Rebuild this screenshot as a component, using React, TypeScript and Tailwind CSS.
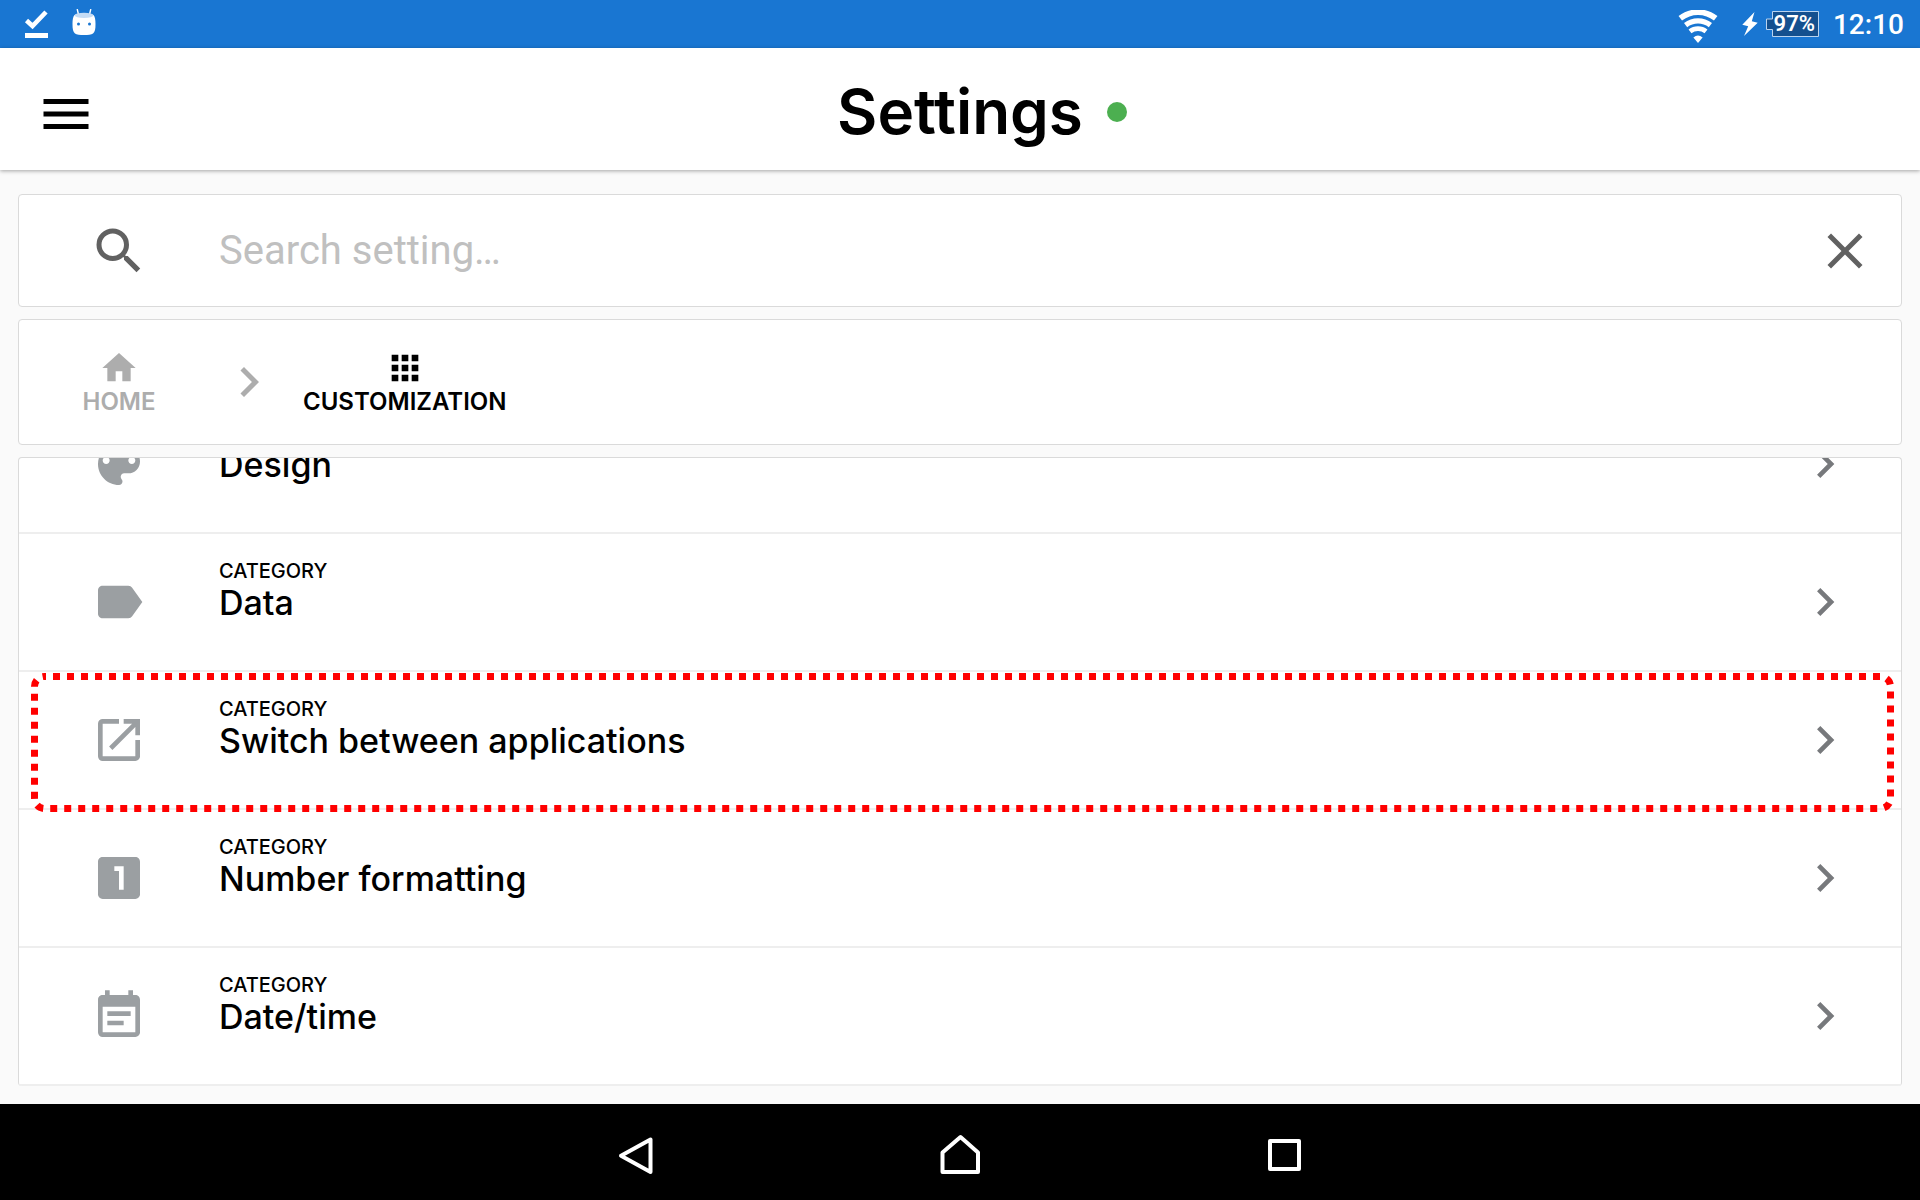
import type { ComponentType } from "react";
import {
  MdApps,
  MdChevronRight,
  MdClose,
  MdEventNote,
  MdHome,
  MdLabel,
  MdLooksOne,
  MdMenu,
  MdOpenInNew,
  MdSearch,
} from "react-icons/md";

type IconProps = { className?: string };

function PaletteIcon({ className }: IconProps) {
  return (
    <svg viewBox="0 0 24 24" fill="currentColor" className={className} aria-hidden="true">
      <path d="M12 3c-4.97 0-9 4.03-9 9s4.03 9 9 9c.83 0 1.5-.67 1.5-1.5 0-.39-.15-.74-.39-1.01-.23-.26-.38-.61-.38-.99 0-.83.67-1.5 1.5-1.5H16c2.76 0 5-2.24 5-5 0-4.42-4.03-8-9-8zm-5.5 9c-.83 0-1.5-.67-1.5-1.5S5.67 9 6.5 9 8 9.67 8 10.5 7.33 12 6.5 12zm3-4C8.67 8 8 7.33 8 6.5S8.67 5 9.5 5s1.5.67 1.5 1.5S10.33 8 9.5 8zm5 0c-.83 0-1.5-.67-1.5-1.5S13.67 5 14.5 5s1.5.67 1.5 1.5S15.33 8 14.5 8zm3 4c-.83 0-1.5-.67-1.5-1.5S16.67 9 17.5 9s1.5.67 1.5 1.5-.67 1.5-1.5 1.5z" />
    </svg>
  );
}

type Category = {
  title: string;
  icon: ComponentType<IconProps>;
  highlighted?: boolean;
};

const categories: Category[] = [
  { title: "Design", icon: PaletteIcon },
  { title: "Data", icon: MdLabel },
  { title: "Switch between applications", icon: MdOpenInNew, highlighted: true },
  { title: "Number formatting", icon: MdLooksOne },
  { title: "Date/time", icon: MdEventNote },
];

function StatusBar() {
  return (
    <div className="flex h-12 shrink-0 items-center justify-between bg-[#1976d2] pr-4 pl-6 text-white">
      <div className="flex items-center gap-6">
        <svg viewBox="0 0 24 30" className="h-[30px] w-6" aria-hidden="true">
          <path d="M2.5 11.5 8.5 17 22 3" fill="none" stroke="currentColor" strokeWidth="4.6" />
          <path d="M1 24h23v5H1z" fill="currentColor" />
        </svg>
        <svg viewBox="0 0 24 30" className="h-[30px] w-6" aria-hidden="true">
          <path d="M6.5 5.5 5.3.5M17.5 5.5l1.2-5" stroke="currentColor" strokeWidth="1.4" strokeLinecap="round" />
          <path
            d="M2.500 6h19c1.500 1.500 2 4.500 2 9 0 5-.5 8-2.500 9.500-1.500 1.200-5 1.500-9 1.500s-7.500-.3-9-1.500C1 23 .5 20 .5 15c0-4.500.5-7.500 2-9z"
            fill="currentColor"
          />
          <ellipse cx="12" cy="6.3" rx="9.5" ry="2.6" fill="#c5dcf5" />
          <circle cx="6.5" cy="15" r="1.5" fill="#1976d2" />
          <circle cx="17.5" cy="15" r="1.5" fill="#1976d2" />
        </svg>
      </div>
      <div className="flex items-center">
        <svg viewBox="0 0 40 33" className="mt-1 mr-6 h-[33px] w-10" aria-hidden="true">
          <g fill="none" stroke="currentColor">
            <path d="M2.3 8.3a28.500 28.500 0 0 1 35.400 0" strokeWidth="5.600" />
            <path d="M7.600 15.100a20.200 20.200 0 0 1 24.800 0" strokeWidth="5.200" />
            <path d="M12 21.400a12.800 12.800 0 0 1 16 0" strokeWidth="4.600" />
          </g>
          <path d="M20 33l-4.600-5.600a7.400 7.400 0 0 1 9.200 0z" fill="currentColor" />
        </svg>
        <svg viewBox="0 0 16 24" className="mr-2 h-6 w-4" fill="currentColor" aria-hidden="true">
          <path d="M12.5 0 .3 12.800l5.900 1.400L2 24 15.700 10.700 9.800 9.300z" />
        </svg>
        <div className="relative mr-[14px] flex h-[26px] w-[53px] items-center justify-end pr-1">
          <svg viewBox="0 0 53 26" className="absolute inset-0" aria-hidden="true">
            <path d="M6.500.5h46v25h-46V18.500h-6V8h6z" fill="#14508f" stroke="#b9d3ef" />
          </svg>
          <span className="relative text-[22px] leading-6 font-semibold">97%</span>
        </div>
        <span className="mt-0.5 text-[28px] leading-8 font-medium">12:10</span>
      </div>
    </div>
  );
}

function Header() {
  return (
    <header className="grid h-[122px] shrink-0 grid-cols-[1fr_auto_1fr] items-center bg-white pt-2.5 shadow-[0_1px_4px_rgba(0,0,0,0.35)]">
      <button type="button" aria-label="Open menu" className="ml-9 size-[60px] text-black">
        <MdMenu className="size-[60px]" />
      </button>
      <h1 className="pb-1 font-[Inter,sans-serif] text-[62px] leading-[64px] font-semibold text-black">Settings</h1>
      <span role="status" aria-label="Connected" className="mb-1 ml-6 size-5 rounded-full bg-[#4caf50]" />
    </header>
  );
}

function SearchCard() {
  return (
    <div className="flex h-[113px] shrink-0 items-center rounded border border-[#dadada] bg-white pr-[26px] pl-[70px] text-[#616161]">
      <label htmlFor="search" aria-label="Search setting" className="mr-[70px]">
        <MdSearch className="size-[60px]" />
      </label>
      <input
        id="search"
        type="text"
        placeholder="Search setting…"
        className="min-w-0 flex-1 bg-transparent text-[40px] leading-[48px] text-[#616161] outline-none placeholder:text-[#c0c0c0]"
      />
      <button type="button" aria-label="Clear search" className="size-[60px]">
        <MdClose className="size-[60px]" />
      </button>
    </div>
  );
}

function Breadcrumbs() {
  return (
    <nav
      aria-label="Breadcrumb"
      className="flex h-[126px] shrink-0 items-center rounded border border-[#dadada] bg-white pl-[62px] font-[Inter,sans-serif] text-2xl leading-7 font-semibold"
    >
      <a href="#home" className="flex w-[76px] flex-col items-center text-[#adadad]">
        <MdHome className="size-10" />
        HOME
      </a>
      <MdChevronRight className="mr-6 ml-[62px] size-[60px] text-[#adadad]" aria-hidden="true" />
      <a href="#customization" aria-current="page" className="flex flex-col items-center text-black">
        <MdApps className="size-10" />
        CUSTOMIZATION
      </a>
    </nav>
  );
}

function CategoryRow({ title, icon: Icon, highlighted }: Category) {
  return (
    <li className="relative shrink-0 border-b-2 border-[#eeeeee]">
      <a href="#category" className="flex h-[136px] items-center pr-12 pl-18">
        <Icon className="mr-18 size-14 shrink-0 text-[#9b9fa2]" />
        <span className="flex min-w-0 flex-1 flex-col self-start pt-[25px] font-[Inter,sans-serif] font-medium text-black">
          <span className="text-xl leading-6">CATEGORY</span>
          <span className="text-[34px] leading-10">{title}</span>
        </span>
        <MdChevronRight className="size-14 shrink-0 text-[#77797c]" aria-hidden="true" />
      </a>
      {highlighted && (
        <div className="pointer-events-none absolute top-px right-[7px] -bottom-1 left-3">
          <svg className="size-full" aria-hidden="true">
            <rect
              x="3.5"
              y="3.5"
              rx="10"
              className="h-[calc(100%-7px)] w-[calc(100%-7px)]"
              fill="none"
              stroke="#ff0000"
              strokeWidth="7"
              strokeDasharray="7 7"
              strokeDashoffset="-8.5"
            />
          </svg>
        </div>
      )}
    </li>
  );
}

function NavigationBar() {
  return (
    <nav aria-label="System" className="flex h-24 shrink-0 items-center justify-center bg-black pt-2 text-white">
      <button type="button" aria-label="Back" className="flex w-[324px] justify-center">
        <svg viewBox="0 0 48 48" className="size-12" fill="none" stroke="currentColor" strokeWidth="4" strokeLinejoin="round">
          <path d="M38.5 7.5v32.500L9 23.800z" />
        </svg>
      </button>
      <button type="button" aria-label="Home" className="flex w-[324px] justify-center">
        <svg viewBox="0 0 48 48" className="size-12" fill="none" stroke="currentColor" strokeWidth="4" strokeLinejoin="round">
          <path d="M24.500 5 42 20.500V40H6.500V20.500z" />
        </svg>
      </button>
      <button type="button" aria-label="Recent apps" className="flex w-[324px] justify-center">
        <svg viewBox="0 0 48 48" className="size-12" fill="none" stroke="currentColor" strokeWidth="4" strokeLinejoin="round">
          <path d="M10 9h29v28H10z" />
        </svg>
      </button>
    </nav>
  );
}

export default function App() {
  return (
    <div className="flex h-screen flex-col overflow-hidden bg-[#fafafa] font-[Roboto,sans-serif]">
      <StatusBar />
      <Header />
      <main className="flex min-h-0 flex-1 flex-col gap-3 px-[18px] pt-6 pb-[18px]">
        <SearchCard />
        <Breadcrumbs />
        <ul className="flex min-h-0 flex-1 flex-col justify-end overflow-hidden rounded border border-b-0 border-[#dadada] bg-white">
          {categories.map((category) => (
            <CategoryRow key={category.title} {...category} />
          ))}
        </ul>
      </main>
      <NavigationBar />
    </div>
  );
}
